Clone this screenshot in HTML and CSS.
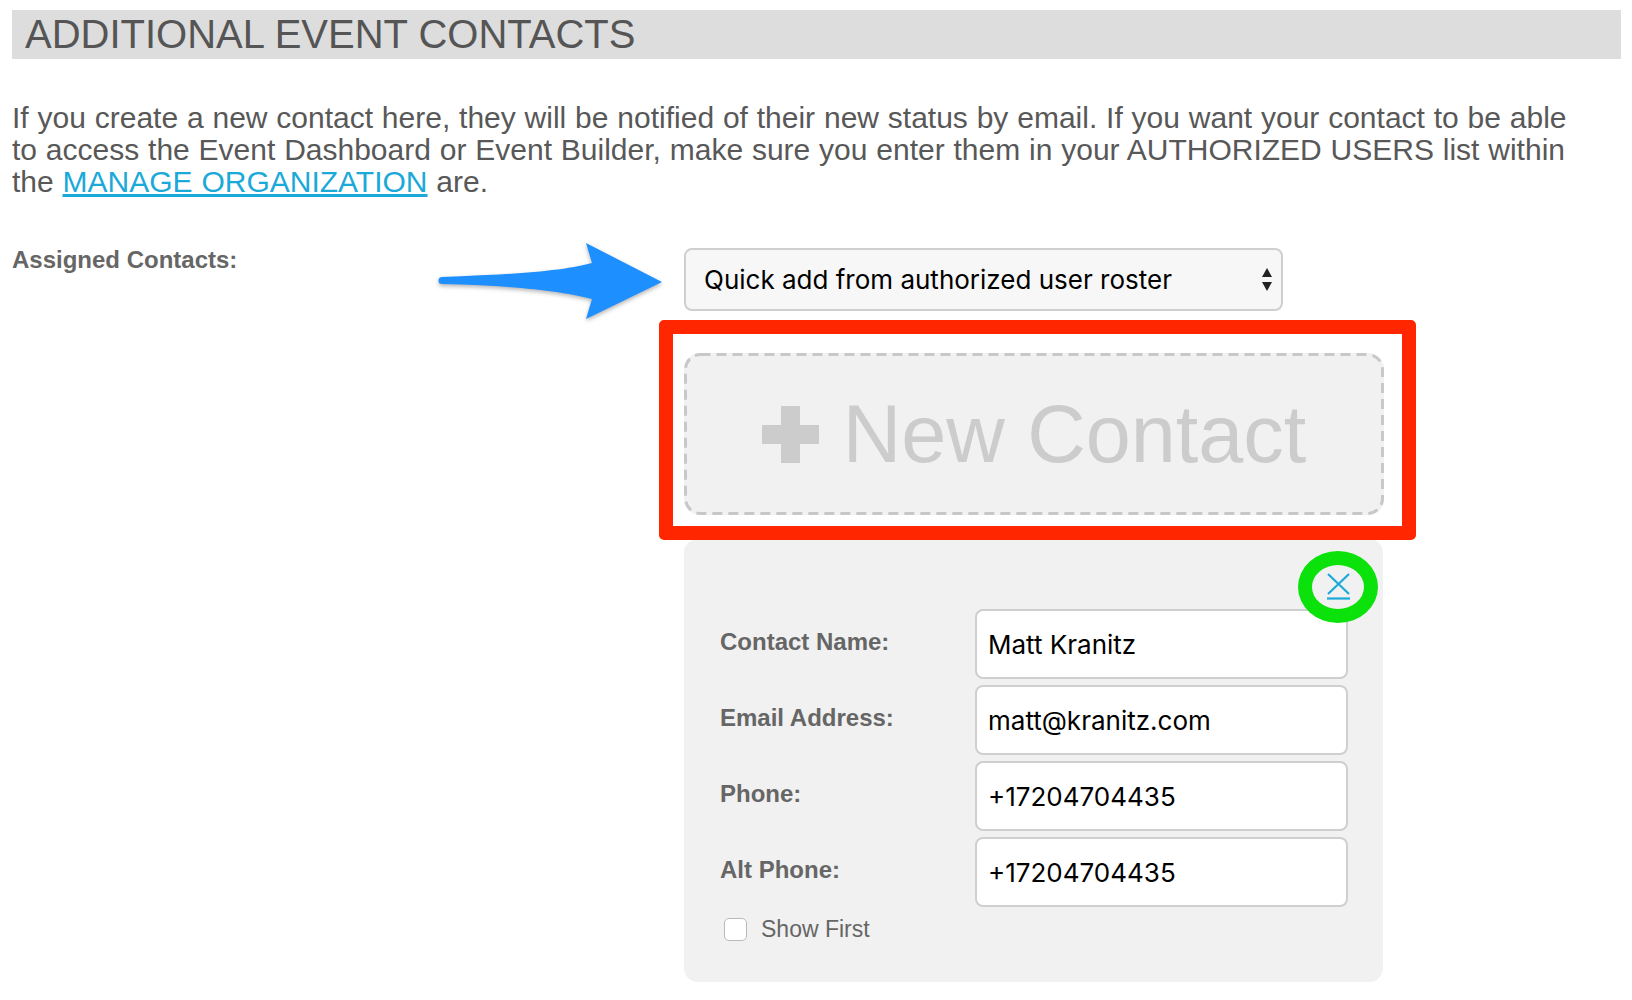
FILE: index.html
```html
<!DOCTYPE html>
<html lang="en">
<head>
  <meta charset="UTF-8">
  <title>Additional Event Contacts</title>
  <meta name="viewport" content="width=device-width, initial-scale=1.0">
  <link rel="stylesheet" href="styles.css">
</head>
<body>

  <div class="page">
    <h2 class="section-title">ADDITIONAL EVENT CONTACTS</h2>

    <p class="intro">If you create a new contact here, they will be notified of their new status by email. If you want your contact to be able<br>to access the Event Dashboard or Event Builder, make sure you enter them in your AUTHORIZED USERS list within<br>the <a href="#">MANAGE ORGANIZATION</a> are.</p>

    <div class="assign">
      <div class="assign-label">Assigned Contacts:</div>

      <!-- annotation arrow -->
      <svg class="note-arrow" width="250" height="100" viewBox="0 0 250 100">
        <path d="M12,47 C70,45 130,42 162,33 L156,13 L232,52 L156,89 L162,69 C130,60 70,55 12,54 A3.5,3.5 0 0 1 12,47 Z"/>
      </svg>

      <div class="assign-fields">
        <div class="roster-select">
          <span>Quick add from authorized user roster</span>
          <svg class="select-arrows" width="10" height="23" viewBox="0 0 10 23">
            <path d="M5 0 L10 9 H0 Z"/>
            <path d="M0 14 H10 L5 23 Z"/>
          </svg>
        </div>

        <div class="new-contact-wrap">
          <button type="button" class="new-contact">
            <svg class="dash-border" width="700" height="162" viewBox="0 0 700 162">
              <rect x="1.5" y="1.5" width="697" height="159" rx="15" ry="15"/>
            </svg>
            <svg class="plus" width="57" height="57" viewBox="0 0 57 57">
              <rect x="19" y="0" width="19" height="57"/>
              <rect x="0" y="19" width="57" height="19"/>
            </svg>
            <span>New Contact</span>
          </button>
          <div class="note-box"></div>
        </div>

        <div class="contact-card">
          <div class="card-close">
            <a href="#" class="remove">
              <svg width="28" height="28" viewBox="0 0 28 28">
                <path d="M4 1 L25 21 M25 1 L4 21"/>
                <path d="M3 25.5 H26"/>
              </svg>
              <span class="note-ring"></span>
            </a>
          </div>

          <div class="field-row">
            <label for="c_name">Contact Name:</label>
            <input type="text" id="c_name" value="Matt Kranitz">
          </div>
          <div class="field-row">
            <label for="c_email">Email Address:</label>
            <input type="text" id="c_email" value="matt@kranitz.com">
          </div>
          <div class="field-row">
            <label for="c_phone">Phone:</label>
            <input type="text" id="c_phone" value="+17204704435">
          </div>
          <div class="field-row">
            <label for="c_alt">Alt Phone:</label>
            <input type="text" id="c_alt" value="+17204704435">
          </div>

          <label class="show-first"><span class="check"></span>Show First</label>
        </div>
      </div>
    </div>
  </div>

</body>
</html>
```

FILE: styles.css
```css
:root {
  --text: #585858;
  --label: #666;
  --link: #1aa9d8;
  --panel: #f1f1f1;
  --line: #cfcfcf;
}
body {
  margin: 0;
  background: #fff;
  font-family: 'Liberation Sans', Arial, sans-serif;
  color: var(--text);
}
.page {
  padding: 10px 11px 0 12px;
}
.section-title {
  margin: 0;
  height: 49px;
  line-height: 49px;
  padding-left: 13px;
  background: #dddddd;
  color: #555;
  font-size: 40px;
  font-weight: normal;
}
.intro {
  margin: 43px 0 50px;
  font-size: 30px;
  line-height: 32px;
  word-spacing: 0.5px;
  white-space: nowrap;
}
.intro a {
  color: var(--link);
}
.assign {
  position: relative;
  display: grid;
  grid-template-columns: 672px 700px;
}
.assign-label {
  font-size: 24px;
  line-height: 24px;
  font-weight: bold;
  color: var(--label);
}
.note-arrow {
  position: absolute;
  left: 418px;
  top: -18px;
  fill: #1e8fff;
  filter: drop-shadow(0 2px 2px rgba(0,0,0,0.3));
}
.roster-select {
  box-sizing: border-box;
  width: 599px;
  height: 63px;
  display: flex;
  align-items: center;
  justify-content: space-between;
  padding: 0 9px 0 18px;
  background: #f7f7f7;
  border: 2px solid var(--line);
  border-radius: 8px;
  font-family: Inter, 'Noto Sans', sans-serif;
  font-size: 26px;
  color: #000;
}
.select-arrows {
  fill: #222;
}
.new-contact-wrap {
  position: relative;
  margin-top: 42px;
}
.new-contact {
  position: relative;
  box-sizing: border-box;
  width: 700px;
  height: 162px;
  display: flex;
  align-items: center;
  justify-content: center;
  gap: 24px;
  padding: 0;
  background: #f1f1f1;
  border: none;
  border-radius: 16px;
  color: #cccccc;
  font-family: 'Liberation Sans', Arial, sans-serif;
  font-size: 81px;
  line-height: 1;
  cursor: pointer;
}
.dash-border {
  position: absolute;
  left: 0;
  top: 0;
  fill: none;
  stroke: #c8c8c8;
  stroke-width: 3;
  stroke-dasharray: 10 6;
}
.plus {
  fill: #cccccc;
}
.note-box {
  position: absolute;
  left: -25px;
  top: -33px;
  right: -32px;
  bottom: -25px;
  border: 14px solid #ff2600;
  border-radius: 5px;
  pointer-events: none;
}
.contact-card {
  box-sizing: border-box;
  width: 699px;
  margin-top: 24px;
  padding: 34px 35px 41px 36px;
  background: var(--panel);
  border-radius: 14px;
}
.card-close {
  display: flex;
  justify-content: flex-end;
  height: 28px;
  margin: 0 -4px 8px 0;
}
.remove {
  position: relative;
  display: block;
  width: 28px;
  height: 28px;
}
.remove svg {
  display: block;
  fill: none;
  stroke: var(--link);
  stroke-width: 2.2;
}
.note-ring {
  position: absolute;
  left: 50%;
  top: 50%;
  width: 80px;
  height: 72px;
  box-sizing: border-box;
  transform: translate(-50%, -50%);
  border: 14px solid #0be10b;
  border-radius: 50%;
  pointer-events: none;
}
.field-row {
  display: grid;
  grid-template-columns: 255px 373px;
  align-items: center;
  margin-bottom: 6px;
}
.field-row label {
  font-size: 24px;
  font-weight: bold;
  color: var(--label);
  margin-top: -4px;
}
.field-row input {
  box-sizing: border-box;
  height: 70px;
  width: 100%;
  padding: 0 11px;
  background: #fff;
  border: 2px solid var(--line);
  border-radius: 8px;
  font-family: Inter, 'Noto Sans', sans-serif;
  font-size: 26px;
  color: #000;
  outline: none;
}
.show-first {
  display: flex;
  align-items: center;
  gap: 14px;
  margin: 10px 0 0 4px;
  height: 24px;
  font-size: 23px;
  color: var(--label);
}
.check {
  box-sizing: border-box;
  width: 23px;
  height: 23px;
  background: #fff;
  border: 1.5px solid #b9b9b9;
  border-radius: 5px;
}
```
